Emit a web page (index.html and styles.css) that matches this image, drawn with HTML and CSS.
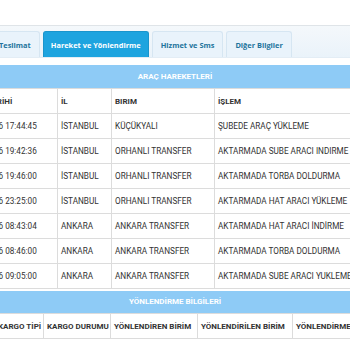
FILE: index.html
```html
<!DOCTYPE html>
<html>
<head>
    <title>Kargo Takip</title>
    <link rel="stylesheet" href="styles.css">
</head>
<body>
    <div class="page">
        <div class="tab-bar">
            <div class="tab">Teslimat</div>
            <div class="tab active">Hareket ve Yönlendirme</div>
            <div class="tab">Hizmet ve Sms</div>
            <div class="tab">Diğer Bilgiler</div>
        </div>

        <div class="panel">
            <div class="section-title">ARAÇ HAREKETLERİ</div>
            <table class="grid moves">
                <colgroup>
                    <col class="c-date">
                    <col class="c-city">
                    <col class="c-unit">
                    <col class="c-op">
                </colgroup>
                <tr>
                    <th>İŞLEM TARİHİ</th>
                    <th>İL</th>
                    <th>BIRIM</th>
                    <th>İŞLEM</th>
                </tr>
                <tr>
                    <td>12.05.2016 17:44:45</td>
                    <td>İSTANBUL</td>
                    <td>KÜÇÜKYALI</td>
                    <td>ŞUBEDE ARAÇ YÜKLEME</td>
                </tr>
                <tr>
                    <td>12.05.2016 19:42:36</td>
                    <td>İSTANBUL</td>
                    <td>ORHANLI TRANSFER</td>
                    <td>AKTARMADA SUBE ARACI INDIRME</td>
                </tr>
                <tr>
                    <td>12.05.2016 19:46:00</td>
                    <td>İSTANBUL</td>
                    <td>ORHANLI TRANSFER</td>
                    <td>AKTARMADA TORBA DOLDURMA</td>
                </tr>
                <tr>
                    <td>12.05.2016 23:25:00</td>
                    <td>İSTANBUL</td>
                    <td>ORHANLI TRANSFER</td>
                    <td>AKTARMADA HAT ARACI YÜKLEME</td>
                </tr>
                <tr>
                    <td>13.05.2016 08:43:04</td>
                    <td>ANKARA</td>
                    <td>ANKARA TRANSFER</td>
                    <td>AKTARMADA HAT ARACI İNDİRME</td>
                </tr>
                <tr>
                    <td>13.05.2016 08:46:00</td>
                    <td>ANKARA</td>
                    <td>ANKARA TRANSFER</td>
                    <td>AKTARMADA TORBA DOLDURMA</td>
                </tr>
                <tr>
                    <td>13.05.2016 09:05:00</td>
                    <td>ANKARA</td>
                    <td>ANKARA TRANSFER</td>
                    <td>AKTARMADA SUBE ARACI YUKLEME</td>
                </tr>
            </table>

            <div class="section-title second">YÖNLENDİRME BİLGİLERİ</div>
            <table class="grid routing">
                <colgroup>
                    <col class="r-no">
                    <col class="r-type">
                    <col class="r-state">
                    <col class="r-from">
                    <col class="r-to">
                    <col class="r-date">
                </colgroup>
                <tr>
                    <th>NO</th>
                    <th>KARGO TİPİ</th>
                    <th>KARGO DURUMU</th>
                    <th>YÖNLENDİREN BİRİM</th>
                    <th>YÖNLENDİRİLEN BİRİM</th>
                    <th>YÖNLENDİRME TARİHİ</th>
                </tr>
            </table>
        </div>
    </div>
</body>
</html>
```

FILE: styles.css
```css
body {
    margin: 0;
    background-color: #fff;
    font-family: Roboto, "Liberation Sans", sans-serif;
    overflow: hidden;
}

.page {
    margin-left: -42px;
    width: 470px;
    padding-top: 25px;
}

.tab-bar {
    display: flex;
    gap: 3px;
    padding: 5px 0 0 32px;
    height: 26px;
    border-top: 1px solid #dfe4e8;
    background: linear-gradient(#f4f8fb, #eaf3fa);
    border-bottom: 1px solid #e3edf5;
}

.tab {
    font-family: "Open Sans", sans-serif;
    font-weight: bold;
    font-size: 7.4px;
    color: #22739c;
    padding: 0 8px;
    line-height: 26px;
    background-color: #e9f3fb;
    border: 1px solid #d6e6f2;
    border-bottom: none;
    border-radius: 3px 3px 0 0;
}

.tab.active {
    color: #fff;
    background-color: #1ea4df;
    border-color: #1a95cc;
    padding: 0 7px;
}

.panel {
    padding-top: 7px;
}

.section-title {
    background-color: #8ecbf6;
    color: #fff;
    font-weight: bold;
    font-size: 8px;
    text-align: center;
    height: 23px;
    line-height: 23px;
    width: 434px;
}

.section-title.second {
    margin-top: 2px;
    height: 22px;
    line-height: 22px;
}

.grid {
    border-collapse: collapse;
    table-layout: fixed;
    font-size: 8.2px;
    color: #333;
}

.grid th,
.grid td {
    height: 24px;
    padding: 0 3px;
    border: 1px solid #dcdcdc;
    text-align: left;
    white-space: nowrap;
    overflow: hidden;
}

.grid th {
    font-weight: bold;
    font-size: 8px;
}

.moves {
    width: 459px;
}

.moves .c-date { width: 99px; }
.moves .c-city { width: 54px; }
.moves .c-unit { width: 103px; }
.moves .c-op { width: 203px; }

.routing {
    width: 444px;
}

.routing .r-no { width: 36px; }
.routing .r-type { width: 49px; }
.routing .r-state { width: 67px; }
.routing .r-from { width: 87px; }
.routing .r-to { width: 95px; }
.routing .r-date { width: 110px; }
```
